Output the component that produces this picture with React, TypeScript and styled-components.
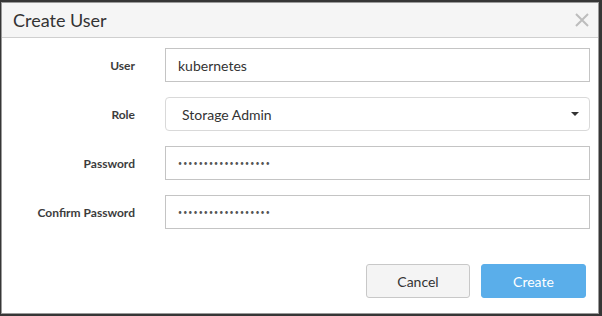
import React from "react";
import { createGlobalStyle, styled } from "styled-components";

const GlobalStyle = createGlobalStyle`
  html, body {
    margin: 0;
    padding: 0;
    background: #3a3a3a;
    font-family: Lato, "Open Sans", Arial, sans-serif;
  }
  * {
    box-sizing: border-box;
  }
`;

const Backdrop = styled.div`
  width: 602px;
  height: 316px;
  padding: 2px 0 0 1px;
  background: #363636;
`;

const Modal = styled.div`
  width: 598px;
  height: 312px;
  background: #ffffff;
  border: 1px solid #9a9a9a;
  display: flex;
  flex-direction: column;
`;

const Header = styled.div`
  height: 35px;
  background: #f5f5f5;
  border-bottom: 1px solid #cfcfcf;
  display: flex;
  align-items: center;
  justify-content: space-between;
  padding: 0 8px 1px 11px;
`;

const Title = styled.h4`
  margin: 0;
  font-size: 18px;
  font-weight: 400;
  color: #333333;
`;

const CloseButton = styled.button`
  border: none;
  background: none;
  padding: 0;
  width: 16px;
  height: 16px;
  display: flex;
  align-items: center;
  justify-content: center;
  cursor: pointer;
`;

const Form = styled.form`
  flex: 1;
  display: flex;
  flex-direction: column;
  padding: 10px 8px 0 0;
  gap: 15px;
`;

const Row = styled.div`
  display: grid;
  grid-template-columns: 133px 1fr;
  column-gap: 30px;
  align-items: center;
`;

const Label = styled.label`
  text-align: right;
  font-size: 12px;
  font-weight: 700;
  color: #3c3c3c;
`;

const Input = styled.input<{ $dots?: boolean }>`
  height: 34px;
  width: 100%;
  border: 1px solid #c4c4c4;
  border-radius: 0;
  padding: 0 12px;
  font-family: inherit;
  font-size: ${(p) => (p.$dots ? "7px" : "14px")};
  letter-spacing: ${(p) => (p.$dots ? "1.1px" : "0")};
  color: ${(p) => (p.$dots ? "#555555" : "#333333")};
  outline: none;
`;

const SelectWrap = styled.div`
  position: relative;
  height: 34px;
`;

const Select = styled.select`
  appearance: none;
  width: 100%;
  height: 34px;
  border: 1px solid #d9d9d9;
  border-radius: 4px;
  background: #ffffff;
  padding: 0 16px;
  font-family: inherit;
  font-size: 14px;
  color: #333333;
  outline: none;
`;

const Caret = styled.span`
  position: absolute;
  right: 11px;
  top: 15px;
  width: 0;
  height: 0;
  border-left: 4px solid transparent;
  border-right: 4px solid transparent;
  border-top: 4px solid #333333;
  pointer-events: none;
`;

const Footer = styled.div`
  display: flex;
  justify-content: flex-end;
  gap: 11px;
  padding: 0 12px 15px 0;
`;

const Button = styled.button<{ $primary?: boolean }>`
  width: ${(p) => (p.$primary ? "105px" : "104px")};
  height: 34px;
  border-radius: 3px;
  border: 1px solid ${(p) => (p.$primary ? "#5aaeea" : "#c8c8c8")};
  background: ${(p) => (p.$primary ? "#5aaeea" : "#f4f4f4")};
  color: ${(p) => (p.$primary ? "#ffffff" : "#333333")};
  font-family: inherit;
  font-size: 14px;
  cursor: pointer;
`;

const App = () => {
  return (
    <>
      <GlobalStyle />
      <Backdrop>
        <Modal>
          <Header>
            <Title>Create User</Title>
            <CloseButton aria-label="Close">
              <svg width="14" height="14" viewBox="0 0 14 14">
                <path
                  d="M1 1 L13 13 M13 1 L1 13"
                  stroke="#bdbdbd"
                  strokeWidth="2"
                />
              </svg>
            </CloseButton>
          </Header>
          <Form>
            <Row>
              <Label htmlFor="user">User</Label>
              <Input id="user" defaultValue="kubernetes" />
            </Row>
            <Row>
              <Label htmlFor="role">Role</Label>
              <SelectWrap>
                <Select id="role" defaultValue="storage">
                  <option value="storage">Storage Admin</option>
                  <option value="array">Array Admin</option>
                  <option value="readonly">Read Only</option>
                </Select>
                <Caret />
              </SelectWrap>
            </Row>
            <Row>
              <Label htmlFor="password">Password</Label>
              <Input
                id="password"
                $dots
                defaultValue="••••••••••••••••••"
              />
            </Row>
            <Row>
              <Label htmlFor="confirm">Confirm Password</Label>
              <Input id="confirm" $dots defaultValue="••••••••••••••••••" />
            </Row>
          </Form>
          <Footer>
            <Button type="button">Cancel</Button>
            <Button type="button" $primary>
              Create
            </Button>
          </Footer>
        </Modal>
      </Backdrop>
    </>
  );
};

export default App;
